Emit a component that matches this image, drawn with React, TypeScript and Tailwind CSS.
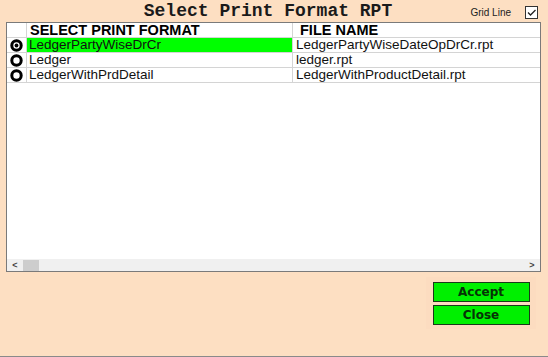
import React from 'react'

const rows = [
  { format: 'LedgerPartyWiseDrCr', file: 'LedgerPartyWiseDateOpDrCr.rpt', selected: true },
  { format: 'Ledger', file: 'ledger.rpt', selected: false },
  { format: 'LedgerWithPrdDetail', file: 'LedgerWithProductDetail.rpt', selected: false },
]

const Radio = ({ on }: { on: boolean }) => (
  <svg width="13" height="13" viewBox="0 0 13 13">
    <circle cx="6.5" cy="6.5" r="4.7" fill="white" stroke="black" strokeWidth="3" />
    {on && <circle cx="6.5" cy="6.5" r="1.9" fill="black" />}
  </svg>
)

export default function App() {
  return (
    <div
      className="w-[548px] h-[357px] bg-[#fddfc2] flex flex-col border-b border-[#8a8a8a] overflow-hidden"
      style={{ fontFamily: '"Liberation Sans", Arial, sans-serif' }}
    >
      {/* --- Title --- */}
      <div className="h-[22px] flex items-center relative">
        <h1
          className="w-full text-center text-[18px] font-bold text-[#1a1a1a] leading-none pr-[12px]"
          style={{ fontFamily: '"Liberation Mono", "Courier New", monospace' }}
        >
          Select Print Format RPT
        </h1>
        <div className="absolute right-[10px] top-[5px] flex items-center gap-[12px]">
          <span className="text-[10px] text-[#222] pr-[2px]">Grid Line</span>
          <div className="w-[13px] h-[13px] border border-[#333] bg-white flex items-center justify-center">
            <svg width="11" height="11" viewBox="0 0 11 11">
              <path d="M2 5.5 L4.5 8 L9.5 3" fill="none" stroke="#222" strokeWidth="1.3" />
            </svg>
          </div>
        </div>
      </div>

      {/* --- Grid --- */}
      <div className="ml-[6px] w-[535px] h-[250px] border border-[#7a7a7a] bg-white flex flex-col">
        <div className="flex h-[15px] border-b border-[#d4d4d4] text-[14.5px] leading-[15px] text-black">
          <div className="w-[20px] border-r border-[#d4d4d4]" />
          <div className="w-[266px] border-r border-[#d4d4d4] pl-[3px] font-bold">SELECT PRINT FORMAT</div>
          <div className="flex-1 pl-[7px] font-bold">FILE NAME</div>
        </div>
        {rows.map((r) => (
          <div key={r.format} className="flex h-[15px] border-b border-[#d4d4d4] text-[13.5px] leading-[14px] text-[#111]">
            <div className="w-[20px] border-r border-[#d4d4d4] flex items-center justify-center">
              <Radio on={r.selected} />
            </div>
            <div className={`w-[266px] border-r border-[#d4d4d4] pl-[2px] ${r.selected ? 'bg-[#00ff00]' : ''}`}>
              {r.format}
            </div>
            <div className="flex-1 pl-[3px]">{r.file}</div>
          </div>
        ))}
        <div className="flex-1" />
        {/* scrollbar */}
        <div className="h-[12px] bg-[#f0f0f0] flex items-center">
          <span className="w-[16px] text-center text-[9px] font-bold text-[#444] leading-none">&lt;</span>
          <div className="w-[16px] h-[11px] bg-[#cdcdcd]" />
          <div className="flex-1" />
          <span className="w-[16px] text-center text-[9px] font-bold text-[#444] leading-none">&gt;</span>
        </div>
      </div>

      {/* --- Buttons --- */}
      <div className="flex justify-end pr-[12px] pt-[5px]">
        <div className="w-[110px] h-[52px] bg-[#fcdcc0] flex flex-col items-center gap-[3px] pt-[5px]">
          <button
            className="w-[97px] h-[20px] bg-[#00f000] border border-[#1a3a1a] text-[12px] font-bold text-[#063306]"
            style={{ fontFamily: 'Verdana, "DejaVu Sans", sans-serif' }}
          >
            Accept
          </button>
          <button
            className="w-[97px] h-[20px] bg-[#00f000] border border-[#1a3a1a] text-[12px] font-bold text-[#063306]"
            style={{ fontFamily: 'Verdana, "DejaVu Sans", sans-serif' }}
          >
            Close
          </button>
        </div>
      </div>
    </div>
  )
}
